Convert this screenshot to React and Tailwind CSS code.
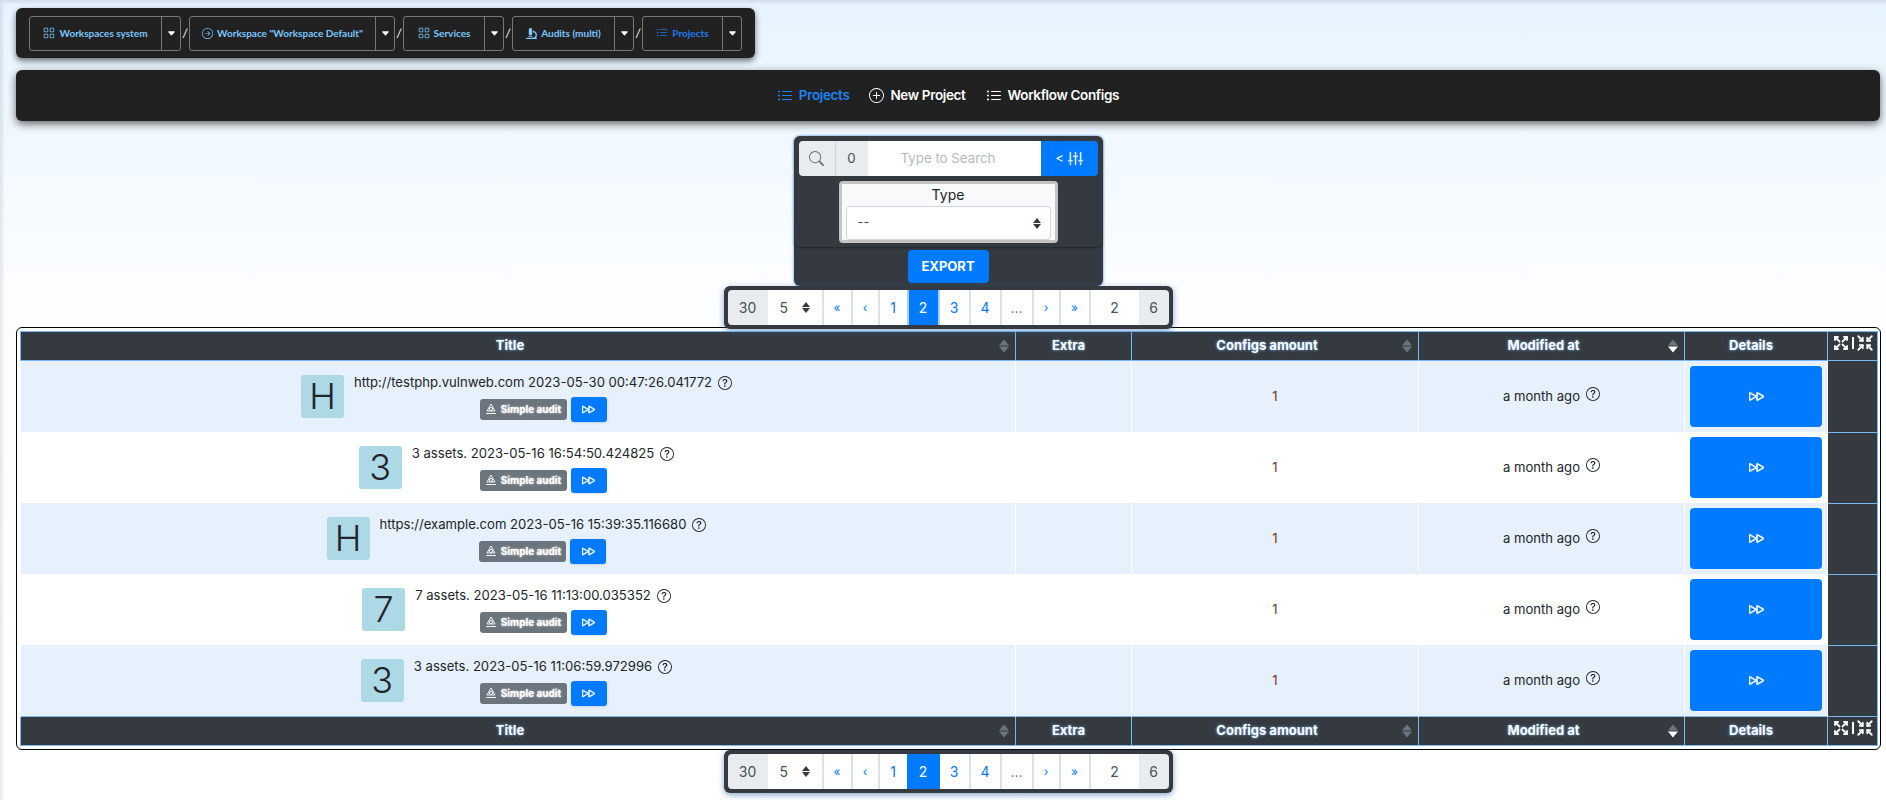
import React from 'react';
import { BsGrid, BsArrowRightCircle, BsListUl, BsPlusCircle, BsSearch, BsSliders2Vertical, BsQuestionCircle, BsFastForward, BsCaretDownFill } from 'react-icons/bs';
import { FaMicroscope } from 'react-icons/fa';
import { TbArrowsMaximize, TbArrowsMinimize } from 'react-icons/tb';

const crumbs = [
  { icon: <BsGrid size={12} />, label: 'Workspaces system', cls: 'w-[152px]' },
  { icon: <BsArrowRightCircle size={11} />, label: 'Workspace "Workspace Default"', cls: 'w-[206px]' },
  { icon: <BsGrid size={12} />, label: 'Services', cls: 'w-[101px]' },
  { icon: <FaMicroscope size={11} />, label: 'Audits (multi)', cls: 'w-[122px]' },
  { icon: <BsListUl size={12} />, label: 'Projects', cls: 'w-[100px]', active: true },
];

const rows = [
  { letter: 'H', title: 'http://testphp.vulnweb.com 2023-05-30 00:47:26.041772' },
  { letter: '3', title: '3 assets. 2023-05-16 16:54:50.424825' },
  { letter: 'H', title: 'https://example.com 2023-05-16 15:39:35.116680' },
  { letter: '7', title: '7 assets. 2023-05-16 11:13:00.035352' },
  { letter: '3', title: '3 assets. 2023-05-16 11:06:59.972996' },
];

const Sort = ({ active }) => (
  <span className="absolute right-[6px] top-1/2 -translate-y-1/2 flex flex-col gap-[1px]">
    <span className="w-0 h-0 border-x-[5px] border-x-transparent border-b-[6px] border-b-[#6c757d]"></span>
    <span className={`w-0 h-0 border-x-[5px] border-x-transparent border-t-[6px] ${active ? 'border-t-white' : 'border-t-[#6c757d]'}`}></span>
  </span>
);

const Stepper = () => (
  <span className="flex flex-col gap-[1px]">
    <span className="w-0 h-0 border-x-[4px] border-x-transparent border-b-[5px] border-b-[#343a40]"></span>
    <span className="w-0 h-0 border-x-[4px] border-x-transparent border-t-[5px] border-t-[#343a40]"></span>
  </span>
);

const AuditIcon = () => (
  <svg width="12" height="12" viewBox="0 0 12 12" fill="none" stroke="currentColor" strokeWidth="0.9">
    <path d="M6 1 L10 8 H2 Z" />
    <circle cx="6" cy="6" r="1.6" />
    <path d="M1 10.5 H11" />
  </svg>
);

const Pagination = ({ focused }) => {
  const cell = 'flex items-center bg-white border-r-2 border-[#dee2e6] h-full';
  return (
    <div className="mx-auto w-[449px] h-[43px] bg-[#343a40] rounded-md p-[4px] shadow-[0_2px_6px_rgba(60,110,170,0.6)] relative z-10">
      <div className="flex h-full text-[14px] rounded-sm overflow-hidden">
        <div className="w-[40px] flex items-center justify-center bg-[#e9ecef] text-[#495057]">30</div>
        <div className={`${cell} w-[56px] justify-between pl-[12px] pr-[12px] text-[#495057]`}>5 <Stepper /></div>
        <div className={`${cell} justify-center w-[29px] text-[#007bff] text-[12px]`}>«</div>
        <div className={`${cell} justify-center w-[27px] text-[#007bff] text-[12px]`}>‹</div>
        <div className="flex items-center justify-center bg-white w-[27px] text-[#007bff]">1</div>
        <div className={`w-[33px] flex items-center justify-center bg-[#007bff] text-white ${focused ? 'border-x-2 border-[#a8d1ff]' : ''}`}>2</div>
        <div className={`${cell} justify-center w-[31px] text-[#007bff]`}>3</div>
        <div className={`${cell} justify-center w-[31px] text-[#007bff]`}>4</div>
        <div className={`${cell} justify-center w-[32px] text-[#6c757d]`}>...</div>
        <div className={`${cell} justify-center w-[27px] text-[#007bff] text-[12px]`}>›</div>
        <div className={`${cell} justify-center w-[30px] text-[#007bff] text-[12px]`}>»</div>
        <div className="w-[48px] flex items-center justify-center bg-white text-[#495057]">2</div>
        <div className="flex-1 flex items-center justify-center bg-[#e9ecef] text-[#495057]">6</div>
      </div>
    </div>
  );
};

const HeadRow = () => {
  const th = 'relative border border-[#7ab8f5] font-bold text-white text-[13px] [text-shadow:0_0_3px_#7ab8f5] h-[29px] p-0 text-center';
  return (
    <tr className="bg-[#343a40]">
      <th className={`${th} pr-[16px]`}>Title<Sort /></th>
      <th className={`${th} pr-[10px]`}>Extra</th>
      <th className={`${th} pr-[16px]`}>Configs amount<Sort /></th>
      <th className={`${th} pr-[16px]`}>Modified at<Sort active /></th>
      <th className={`${th} pr-[10px]`}>Details</th>
      <th className={th}>
        <span className="flex items-center justify-center gap-[2px] -mt-[6px]">
          <TbArrowsMaximize size={18} strokeWidth={2.4} />
          <span className="w-[2px] h-[12px] bg-white"></span>
          <TbArrowsMinimize size={18} strokeWidth={2.4} />
        </span>
      </th>
    </tr>
  );
};

const App = () => {
  return (
    <div className="h-[800px] overflow-hidden bg-gradient-to-b from-[#e6f4ff] via-[#fbfdff] via-[35%] to-white shadow-[inset_3px_3px_3px_rgba(0,0,0,0.08)] pt-[8px] pl-[16px] pr-[6px] font-['Inter',sans-serif] text-[#212529]">
      {/* Breadcrumbs */}
      <div className="w-[739px] h-[50px] bg-[#212121] rounded-md shadow-[0_3px_6px_rgba(0,0,0,0.55)] flex items-center pl-[13px] gap-[2px]">
        {crumbs.map((c, i) => (
          <React.Fragment key={i}>
            {i > 0 && <span className="text-white text-[11px] italic w-[4px] text-center">/</span>}
            <div className={`${c.cls} h-[35px] border border-[#777] rounded-[3px] flex items-stretch`}>
              <div className={`flex-1 flex items-center justify-center gap-[4px] font-['Lato',sans-serif] text-[10px] font-bold whitespace-nowrap ${c.active ? 'text-[#1a7bea]' : 'text-[#7cc7ff]'}`}>
                {c.icon}
                {c.label}
              </div>
              <div className="w-[19px] border-l border-[#777] flex items-center justify-center text-white">
                <BsCaretDownFill size={9} />
              </div>
            </div>
          </React.Fragment>
        ))}
      </div>

      {/* Navbar */}
      <nav className="mt-[12px] h-[51px] bg-[#212121] rounded-md shadow-[0_3px_8px_rgba(0,0,0,0.6)] flex items-center justify-center gap-[20px] text-[13.5px] tracking-[-0.35px] font-semibold text-white">
        <a className="flex items-center gap-[6px] text-[#1d84f5]"><BsListUl size={16} />Projects</a>
        <a className="flex items-center gap-[6px]"><BsPlusCircle size={15} />New Project</a>
        <a className="flex items-center gap-[6px]"><BsListUl size={16} />Workflow Configs</a>
      </nav>

      {/* Search */}
      <div className="mx-auto mt-[15px] w-[309px] h-[150px] bg-[#343a40] rounded-md shadow-[0_0_3px_#4a90d9] flex flex-col items-center">
        <div className="w-full px-[5px] pt-[5px] pb-[4px] rounded-md flex flex-col items-center shadow-[0_1px_2px_rgba(0,0,0,0.35)]">
          <div className="flex w-full h-[35px] text-[13.3px]">
            <div className="w-[37px] flex items-center justify-center bg-[#e9ecef] border-r border-[#ced4da] rounded-l-sm text-[#6c757d]"><BsSearch size={15} /></div>
            <div className="w-[32px] flex items-center justify-center bg-[#e9ecef] text-[#495057]">0</div>
            <div className="flex-1 flex items-center justify-center pr-[12px] bg-white text-[#b5b9bd]">Type to Search</div>
            <div className="w-[57px] flex items-center justify-center gap-[4px] bg-[#007bff] text-white rounded-r-sm text-[13px]">&lt; <BsSliders2Vertical size={15} stroke="currentColor" strokeWidth={0.5} /></div>
          </div>
          <div className="mt-[5px] w-[219px] h-[62px] bg-[#f8f9fa] border-[3px] border-[#c4c4c4] rounded-sm px-[4px] flex flex-col items-center">
            <span className="text-[14px] leading-[22px]">Type</span>
            <div className="w-full h-[34px] bg-white border border-[#ced4da] rounded-sm flex items-center justify-between pl-[11px] pr-[9px] text-[13px] text-[#495057]">
              --
              <Stepper />
            </div>
          </div>
        </div>
        <button className="mt-[3px] w-[81px] h-[33px] bg-[#007bff] text-white text-[13px] font-bold rounded-sm">EXPORT</button>
      </div>

      <Pagination focused />

      {/* Table */}
      <div className="-mt-[2px] border border-black rounded-md bg-white p-[3px] -mr-[1px]">
        <table className="w-[1857px] table-fixed border-collapse text-[13.1px]">
          <colgroup>
            <col className="w-[995px]" />
            <col className="w-[116px]" />
            <col className="w-[287px]" />
            <col className="w-[266px]" />
            <col className="w-[143px]" />
            <col className="w-[50px]" />
          </colgroup>
          <thead><HeadRow /></thead>
          <tbody>
            {rows.map((r, i) => (
              <tr key={i} className={`h-[71px] ${i % 2 === 0 ? 'bg-[#e6f1fd]' : 'bg-white'}`}>
                <td className="border-x border-white p-0 pr-[3px]">
                  <div className="flex items-center justify-center gap-[10px]">
                    <div className="w-[43px] h-[43px] bg-[#add8e6] rounded-[3px] flex items-center justify-center text-[36px] font-light leading-none">{r.letter}</div>
                    <div className="mt-[2px] flex flex-col items-center gap-[4px]">
                      <span className="flex items-center gap-[6px] whitespace-nowrap">{r.title}<BsQuestionCircle size={14} /></span>
                      <div className="flex items-center gap-[4px]">
                        <span className="h-[21px] w-[87px] bg-[#6c757d] rounded-[3px] text-white text-[10px] font-bold [text-shadow:0_0_2px_#fff] flex items-center justify-center gap-[4px]"><AuditIcon />Simple audit</span>
                        <span className="h-[25px] w-[36px] bg-[#007bff] rounded-[3px] text-white flex items-center justify-center shadow-sm"><BsFastForward size={13} stroke="currentColor" strokeWidth={0.7} /></span>
                      </div>
                    </div>
                  </div>
                </td>
                <td className="border-x border-white p-0"></td>
                <td className="border-x border-white p-0 text-center text-[#7a2e2e]">1</td>
                <td className="border-x border-white p-0 text-center">
                  <span className="inline-flex items-start gap-[6px]">a month ago<BsQuestionCircle size={14} /></span>
                </td>
                <td className="border-x border-white p-[5px]">
                  <div className="h-[61px] bg-[#007bff] rounded-[4px] text-white flex items-center justify-center"><BsFastForward size={15} stroke="currentColor" strokeWidth={0.7} /></div>
                </td>
                <td className="border border-[#7ab8f5] bg-[#343a40] p-0"></td>
              </tr>
            ))}
          </tbody>
          <tfoot><HeadRow /></tfoot>
        </table>
      </div>

      <Pagination />
    </div>
  );
};

export default App;
